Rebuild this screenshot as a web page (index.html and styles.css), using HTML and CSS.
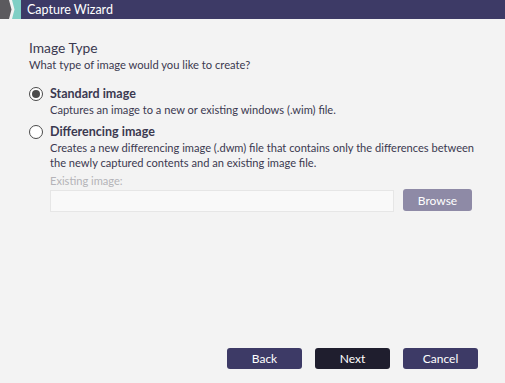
FILE: index.html
```html
<!DOCTYPE html>
<html>
<head>
<meta charset="utf-8">
<link rel="stylesheet" href="styles.css">
</head>
<body>
<div class="titlebar">
  <svg class="appicon" width="21" height="19" viewBox="0 0 21 19">
    <rect x="0" y="0" width="21" height="19" fill="#5b5a5e"/>
    <rect x="12" y="0" width="9" height="19" fill="#7fcfc5"/>
    <path d="M9 0 L12 0 L14.5 9.5 L12 19 L9 19 L11.5 9.5 Z" fill="#f2f2f2"/>
  </svg>
  <span class="title">Capture Wizard</span>
</div>
<main class="content">
  <h1 class="heading">Image Type</h1>
  <p class="sub">What type of image would you like to create?</p>
  <div class="option">
    <span class="radio checked"></span>
    <div class="opt-body">
      <div class="opt-label">Standard image</div>
      <div class="opt-desc">Captures an image to a new or existing windows (.wim) file.</div>
    </div>
  </div>
  <div class="option second">
    <span class="radio"></span>
    <div class="opt-body">
      <div class="opt-label">Differencing image</div>
      <div class="opt-desc">Creates a new differencing image (.dwm) file that contains only the differences between the newly captured contents and an existing image file.</div>
      <div class="field-label">Existing image:</div>
      <div class="field-row">
        <div class="input"></div>
        <button class="btn browse">Browse</button>
      </div>
    </div>
  </div>
</main>
<footer class="footer">
  <button class="btn nav">Back</button>
  <button class="btn nav primary">Next</button>
  <button class="btn nav">Cancel</button>
</footer>
</body>
</html>
```
FILE: styles.css
```css
* { box-sizing: border-box; }
html, body { margin: 0; padding: 0; }
body {
  width: 505px;
  height: 383px;
  background: #f3f3f3;
  font-family: Lato, "Noto Sans", sans-serif;
  color: #3b3950;
  display: flex;
  flex-direction: column;
  overflow: hidden;
}
.titlebar {
  height: 19px;
  background: #3d3a66;
  display: flex;
  align-items: center;
  gap: 6px;
}
.appicon { display: block; }
.title {
  color: #ffffff;
  font-size: 12.5px;
  line-height: 19px;
}
.content {
  flex: 1;
  padding: 20px 20px 0 29px;
}
.heading {
  margin: 0;
  font-size: 13.8px;
  font-weight: normal;
  line-height: 18px;
  color: #3b3950;
}
.sub {
  margin: 0;
  font-size: 11.2px;
  line-height: 16px;
  color: #3b3950;
}
.option {
  display: flex;
  gap: 7px;
  margin-top: 12px;
}
.option.second { margin-top: 6px; }
.radio {
  width: 14px;
  height: 14px;
  border: 1.3px solid #4a4a4a;
  border-radius: 50%;
  background: #fff;
  margin-top: 2px;
  flex: none;
  display: flex;
  align-items: center;
  justify-content: center;
}
.radio.checked::after {
  content: "";
  width: 8px;
  height: 8px;
  border-radius: 50%;
  background: #4a4a4a;
}
.opt-body { flex: 1; }
.opt-label {
  font-size: 12.5px;
  font-weight: bold;
  line-height: 17px;
  color: #3b3950;
}
.opt-desc {
  font-size: 11.1px;
  line-height: 15px;
  color: #3b3950;
}
.field-label {
  margin-top: 3px;
  font-size: 11.1px;
  line-height: 15px;
  color: #b4b3b8;
}
.field-row {
  display: flex;
  gap: 9px;
  margin-top: 2px;
}
.input {
  flex: none;
  width: 344px;
  height: 22px;
  background: #f9f9f9;
  border: 1px solid #e6e6e6;
}
.btn {
  font-family: inherit;
  border: none;
  border-radius: 3px;
  color: #fff;
  font-size: 12px;
  padding: 0;
  cursor: default;
}
.browse {
  width: 69px;
  height: 22px;
  background: #8e8aa6;
  margin-top: -1px;
}
.footer {
  display: flex;
  justify-content: flex-end;
  gap: 13px;
  padding: 0 27px 14px 0;
}
.nav {
  width: 75px;
  height: 21px;
  background: #3d3a66;
}
.nav.primary { background: #1f1e2e; }
```
